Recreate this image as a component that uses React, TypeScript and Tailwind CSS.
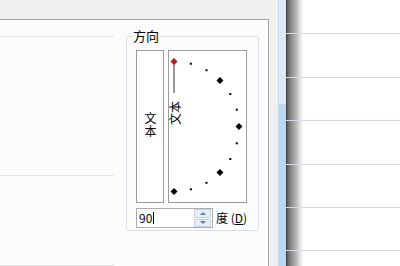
import React from 'react';

const font = "font-['Noto_Sans_CJK_SC','Noto_Sans',sans-serif]";

// orientation dial: semicircle of marks every 15 degrees
function Dial() {
    const cx = 5;
    const cy = 75.5;
    const r = 65;
    const marks: { x: number; y: number; big: boolean; red: boolean }[] = [];
    for (let a = 90; a >= -90; a -= 15) {
        const rad = (a * Math.PI) / 180;
        marks.push({
            x: cx + r * Math.cos(rad),
            y: cy - r * Math.sin(rad),
            big: a % 45 === 0,
            red: a === 90,
        });
    }

    return (
        <div className="relative w-[79px] h-full border border-[#9c9c9c] bg-white">
            <svg width="77" height="151" className="block overflow-visible">
                <line x1="5" y1="12" x2="5" y2="42" stroke="#333" strokeWidth="1" />
                {marks.map((m, i) =>
                    m.big ? (
                        <polygon
                            key={i}
                            points={`${m.x},${m.y - 3.5} ${m.x + 3.5},${m.y} ${m.x},${m.y + 3.5} ${m.x - 3.5},${m.y}`}
                            fill={m.red ? '#c0141c' : '#000'}
                        />
                    ) : (
                        <rect key={i} x={m.x - 1} y={m.y - 1} width="2" height="2" fill="#000" />
                    )
                )}
            </svg>
            {/* rotated caption, reads bottom to top */}
            <span className="absolute left-[-2px] top-[46px] w-[16px] h-[28px] leading-[16px] text-[12px] [writing-mode:vertical-rl] [text-orientation:sideways] rotate-180">
                文本
            </span>
        </div>
    );
}

function Spinner() {
    return (
        <div className="flex flex-col w-[17px] h-[18px] my-auto mr-[1px] gap-px">
            <div className="flex-1 flex items-center justify-center bg-[#e6eef8] border border-[#c3d0e0] rounded-[1px]">
                <div className="w-0 h-0 border-l-[3px] border-r-[3px] border-b-[3px] border-l-transparent border-r-transparent border-b-[#5a7fb5]" />
            </div>
            <div className="flex-1 flex items-center justify-center bg-[#e6eef8] border border-[#c3d0e0] rounded-[1px]">
                <div className="w-0 h-0 border-l-[3px] border-r-[3px] border-t-[3px] border-l-transparent border-r-transparent border-t-[#5a7fb5]" />
            </div>
        </div>
    );
}

export default function App() {
    return (
        <div className={`w-[400px] h-[266px] overflow-hidden flex bg-white text-[12px] text-black ${font}`}>
            {/* Dialog area */}
            <div className="w-[278px] shrink-0 flex flex-col bg-[#f0f0f0]">
                <div className="h-[19px] shrink-0" />
                <div className="flex-1 flex">
                    <div className="w-[269px] border-t border-r border-[#a3a3a3] bg-[#fcfcfc] flex">
                        {/* list on the left */}
                        <div className="w-[114px] flex flex-col">
                            <div className="h-[17px] border-b border-[#e2e2e2]" />
                            <div className="h-[139px] border-b border-[#e2e2e2]" />
                            <div className="h-[90px] border-b border-[#e2e2e2]" />
                        </div>

                        {/* 方向 group */}
                        <div className="relative ml-[12px] mt-[16px] w-[133px] self-start border border-[#d9dfe4] rounded-[3px] pl-[9px] pt-[13px] pb-[2px]">
                            <span className="absolute left-[5px] top-[-9px] px-[1px] bg-[#fcfcfc] text-[13px] leading-[16px]">
                                方向
                            </span>
                            <div className="flex gap-[4px] h-[153px]">
                                <div className="w-[28px] h-full border border-[#9c9c9c] bg-white flex items-center justify-center pb-[3px]">
                                    <span className="[writing-mode:vertical-rl] leading-[16px] tracking-[1px]">文本</span>
                                </div>
                                <Dial />
                            </div>
                            <div className="flex items-center mt-[5px]">
                                <div className="w-[77px] h-[20px] border border-[#abadb3] bg-white flex">
                                    <div className="flex-1 flex items-center pl-[2px] leading-none">
                                        <span>90</span>
                                        <span className="w-px h-[12px] bg-black ml-px" />
                                    </div>
                                    <Spinner />
                                </div>
                                <span className="ml-[3px]">
                                    度 (<span className="underline">D</span>)
                                </span>
                            </div>
                        </div>
                    </div>
                </div>
            </div>

            {/* Scrollbar */}
            <div className="w-[8px] shrink-0 flex flex-col border-l border-[#c6dbee]">
                <div className="h-[104px] bg-[#dde9f5]" />
                <div className="flex-1 bg-[#bcd7f1]" />
            </div>

            {/* Document pages */}
            <div className="flex-1 flex flex-col bg-[linear-gradient(to_right,#2e2e2e_0px,#5a5a5a_1px,#8a8a8a_5px,#b4b4b4_10px,#e2e2e2_14px,#ffffff_17px)]">
                <div className="h-[34px] shrink-0 border-b border-[#d6d9e1]" />
                <div className="h-[44px] shrink-0 border-b border-[#d6d9e1]" />
                <div className="h-[43px] shrink-0 border-b border-[#d6d9e1]" />
                <div className="h-[44px] shrink-0 border-b border-[#d6d9e1]" />
                <div className="h-[43px] shrink-0 border-b border-[#d6d9e1]" />
                <div className="h-[43px] shrink-0 border-b border-[#d6d9e1]" />
            </div>
        </div>
    );
}
